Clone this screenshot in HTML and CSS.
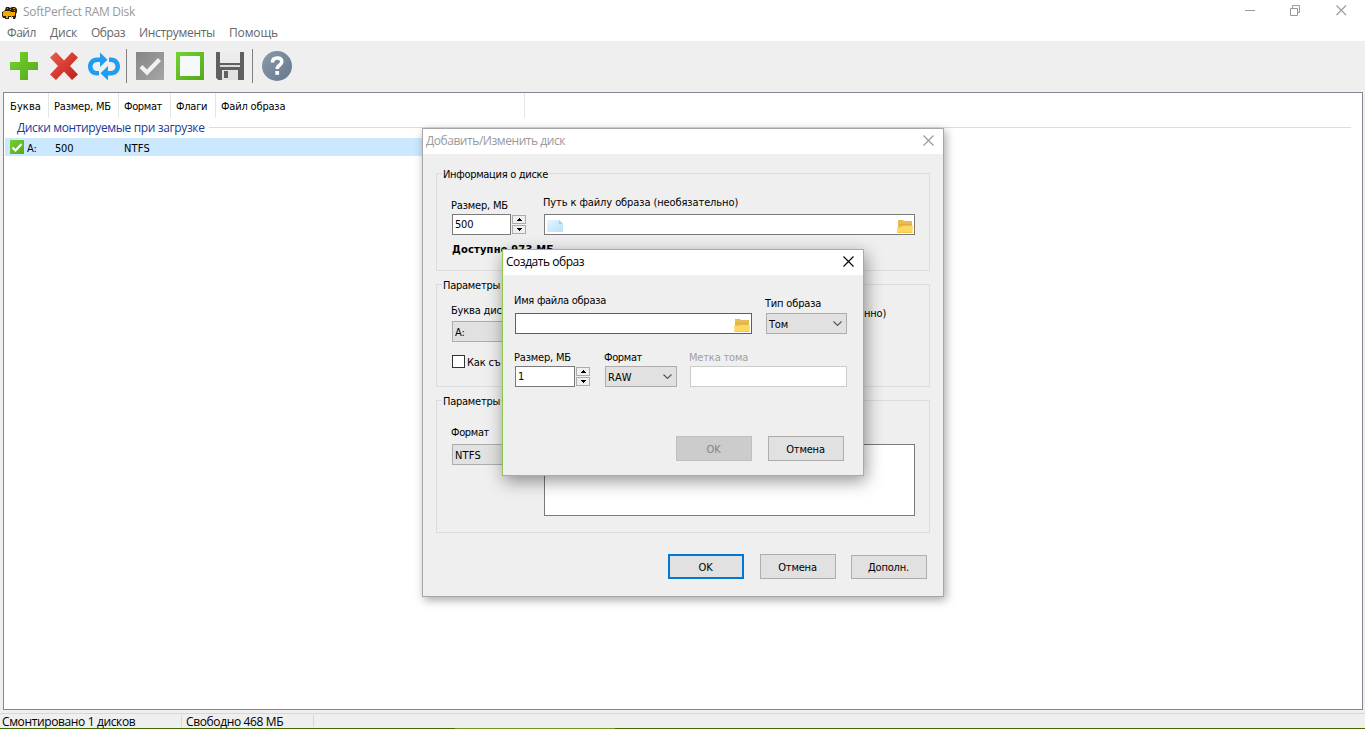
FILE: index.html
```html
<!DOCTYPE html>
<html lang="ru">
<head>
<meta charset="utf-8">
<title>SoftPerfect RAM Disk</title>
<link rel="stylesheet" href="styles.css">
</head>
<body>
<svg class="defs" width="0" height="0">
  <defs>
    <linearGradient id="gGreen" x1="0" y1="0" x2="1" y2="1"><stop offset="0" stop-color="#74d22f"/><stop offset="1" stop-color="#55a81c"/></linearGradient>
    <linearGradient id="gRed" x1="0" y1="0" x2="1" y2="1"><stop offset="0" stop-color="#ee5b4e"/><stop offset="1" stop-color="#bf1e16"/></linearGradient>
    <linearGradient id="gGray" x1="0" y1="0" x2="1" y2="1"><stop offset="0" stop-color="#858585"/><stop offset="1" stop-color="#a6a6a6"/></linearGradient>
    <linearGradient id="gSlate" x1="0" y1="0" x2="1" y2="1"><stop offset="0" stop-color="#8a9aac"/><stop offset="1" stop-color="#65788c"/></linearGradient>
    <linearGradient id="gDoc" x1="0" y1="0" x2="1" y2="1"><stop offset="0" stop-color="#e4f4ff"/><stop offset="1" stop-color="#b9e0fa"/></linearGradient>
    <symbol id="folder" viewBox="0 0 16 14"><path fill="#e8bc55" d="M1 0h5l1 1h8v8H1z"/><path fill="#dfad48" d="M1 4h14v1H1z"/><path fill="#ffd75e" d="M6 6h10l-.5 7H.5L0 7h5z"/><path fill="#f5c84c" d="M.5 12h15v1H.5z"/></symbol>
    <symbol id="close" viewBox="0 0 11 11"><path fill="none" stroke="currentColor" stroke-width="1.1" d="M.5.5l10 10M10.5.5l-10 10"/></symbol>
    <symbol id="chev" viewBox="0 0 9 5"><path fill="none" stroke="#555" stroke-width="1.1" d="M.5.5l4 4 4-4"/></symbol>
    <symbol id="up" viewBox="0 0 5 3"><path d="M2 0h1v1h1v1h1v1H0V2h1V1h1z"/></symbol>
    <symbol id="down" viewBox="0 0 5 3"><path d="M2 3h1V2h1V1h1V0H0v1h1v1h1z"/></symbol>
  </defs>
</svg>
<div class="app">
  <header class="titlebar">
    <svg class="logo" width="16" height="14" viewBox="0 0 16 14"><path fill="#2b2413" d="M4 1h3l1 1 2-1h3l2 2v3l-1 2v3l-1 2h-2v-2H7v2H3v-1H1L0 10V6l2-1 1-1z"/><path fill="#f7a900" d="M1 6l2-1h5l1 1h4v3l-1 1h-2v2H9v-2H6v2H4v-2H1z"/><path fill="#d98f00" d="M5 2h1v1H5zM11 2h2v1h-2zM8 3h1v1H8zM12 4h1v1h-1z"/></svg>
    <span class="apptitle ui ls-28">SoftPerfect RAM Disk</span>
    <svg class="winctl" width="102" height="11" viewBox="0 0 102 11"><g fill="none" stroke="#999"><path d="M0 5.500h10M45.500 3.500h7v7h-7zM47.500 3V.5h7v7H53"/><path stroke-width="1.100" d="M91.500.5l9.500 9.500M101 .5L91.500 10"/></g></svg>
  </header>
  <nav class="menu ui">
    <span class="m1">Файл</span><span class="m2">Диск</span><span class="m3">Образ</span><span class="m4">Инструменты</span><span class="m5">Помощь</span>
  </nav>
  <div class="toolbar">
    <svg width="28" height="28" viewBox="0 0 28 28"><path fill="url(#gGreen)" d="M10 0h8v10h10v8H18v10h-8V18H0v-8h10z"/></svg>
    <svg width="28" height="28" viewBox="0 0 28 28"><path fill="url(#gRed)" d="M6 0l8 8.500L22 0l6 5.500-8 8.500 8 8.500-6 5.500-8-8.500L6 28l-6-5.500L8 14 0 5.500z"/></svg>
    <svg class="refresh" width="32" height="28" viewBox="0 0 32 28"><g fill="#1f9df1"><path d="M12 .5L19.500 7.800 12 15v-5H9.500c-3 0-5 1.800-5 4.500s2 4.500 4.500 4.500h2v4.500H9C3.500 23.500 0 19.500 0 14.500S3.500 5.500 9 5.500h3z"/><path d="M20 28.500L12.500 21.200 20 14v5h2.500c3 0 5-1.800 5-4.500s-2-4.500-4.500-4.500h-2V5.500h2c5.500 0 9 4 9 9s-3.500 9-9 9h-3z"/></g></svg>
    <i class="tsep s1"></i>
    <svg width="28" height="28" viewBox="0 0 28 28"><path fill="url(#gGray)" d="M0 0h28v28H0z"/><path fill="none" stroke="#f2f2f2" stroke-width="4.200" d="M5 14.500l6 6L23.500 7.500"/></svg>
    <svg width="28" height="28" viewBox="0 0 28 28"><path fill="url(#gGreen)" d="M0 0h28v28H0z"/><path fill="#f4f9fb" d="M4 4h20v20H4z"/></svg>
    <svg width="28" height="28" viewBox="0 0 28 28"><path fill="#606060" d="M0 0h28v28H2l-2-2z"/><path fill="#ececec" d="M4 0h20v11H4z"/><path fill="#dcdcdc" d="M4 13h20v2H4z"/><path fill="#e2e2e2" d="M6 18h16v10H6z"/><path fill="#606060" d="M8 19h4v7H8z"/><path fill="#eee" d="M0 26v2h2z"/></svg>
    <i class="tsep s2"></i>
    <svg class="help" width="30" height="30" viewBox="0 0 30 30"><circle cx="15" cy="15" r="15" fill="url(#gSlate)"/><path fill="none" stroke="#fff" stroke-width="3.600" d="M10.500 11.500C10.500 8.500 12.500 7 15.200 7c2.800 0 4.600 1.500 4.600 3.800 0 3.400-4.600 3.400-4.600 6.700v.5"/><path fill="#fff" d="M13.300 20h3.800v3.800h-3.800z"/></svg>
  </div>
  <main class="list">
    <div class="cols">
      <span class="c1">Буква</span><span class="c2">Размер, МБ</span><span class="c3">Формат</span><span class="c4">Флаги</span><span class="c5">Файл образа</span>
    </div>
    <div class="group ui"><span class="gname">Диски монтируемые при загрузке</span><i></i></div>
    <div class="row">
      <svg width="14" height="14" viewBox="0 0 14 14"><path fill="url(#gGreen)" d="M0 0h14v14H0z"/><path fill="none" stroke="#fff" stroke-width="2.200" d="M2.500 7.500l3 3 6-6.500"/></svg>
      <span class="r1">A:</span><span class="r2">500</span><span class="r3">NTFS</span>
    </div>
  </main>
  <footer class="status ui"><span class="st1">Смонтировано 1 дисков</span><span class="st2">Свободно 468 МБ</span></footer>
  <div class="taskline"><i></i></div>
</div>

<section class="win edit">
  <header class="wtitle ui"><span class="et">Добавить/Изменить диск</span><svg width="11" height="11"><use href="#close"/></svg></header>
  <fieldset class="f1">
    <legend><span class="lg1">Информация о диске</span></legend>
    <div class="size">
      <label>Размер, МБ</label>
      <div class="spinrow"><div class="field w59">500</div><div class="spin"><i><svg width="5" height="3"><use href="#up"/></svg></i><i><svg width="5" height="3"><use href="#down"/></svg></i></div></div>
      <strong>Доступно 973 МБ</strong>
    </div>
    <div class="path">
      <label>Путь к файлу образа (необязательно)</label>
      <div class="field pathfield"><svg width="16" height="12" viewBox="0 0 16 12"><path fill="url(#gDoc)" d="M0 0h12l4 4v8H0z"/><path fill="#9fd0f2" d="M12 0v4h4z"/></svg><svg width="16" height="14"><use href="#folder"/></svg></div>
    </div>
  </fieldset>
  <fieldset class="f2">
    <legend><span>Параметры</span></legend>
    <div class="letter">
      <label>Буква дис</label>
      <div class="select"><span>A:</span></div>
      <div class="check"><i></i><span>Как съ</span></div>
    </div>
    <span class="tail">нно)</span>
  </fieldset>
  <fieldset class="f3">
    <legend><span>Параметры</span></legend>
    <div class="fmt"><label class="fl">Формат</label><div class="select wide"><span>NTFS</span></div></div>
    <div class="area"></div>
  </fieldset>
  <div class="buttons"><button class="primary" type="button">OK</button><button type="button">Отмена</button><button class="more" type="button">Дополн.</button></div>
</section>

<section class="win create">
  <header class="wtitle ui"><span class="ct">Создать образ</span><svg width="11" height="11"><use href="#close"/></svg></header>
  <div class="crow r-a">
    <div class="g-name"><label>Имя файла образа</label><div class="field focus"><svg width="16" height="14"><use href="#folder"/></svg></div></div>
    <div class="g-type"><label>Тип образа</label><div class="select"><span>Том</span><svg width="9" height="5"><use href="#chev"/></svg></div></div>
  </div>
  <div class="crow r-b">
    <div class="g-size"><label>Размер, МБ</label><div class="spinrow"><div class="field w60">1</div><div class="spin"><i><svg width="5" height="3"><use href="#up"/></svg></i><i><svg width="5" height="3"><use href="#down"/></svg></i></div></div></div>
    <div class="g-fmt"><label class="fl up">Формат</label><div class="select"><span class="raw">RAW</span><svg width="9" height="5"><use href="#chev"/></svg></div></div>
    <div class="g-vol"><label class="off">Метка тома</label><div class="field dis"></div></div>
  </div>
  <div class="cbuttons"><button class="disabled" type="button">OK</button><button type="button">Отмена</button></div>
</section>
</body>
</html>
```
FILE: styles.css
```css
* { box-sizing: border-box; }
body { margin: 0; width: 1365px; height: 729px; overflow: hidden; background: #fff; color: #000; font: 11px/14px "DejaVu Sans Condensed", "DejaVu Sans", sans-serif; font-stretch: condensed; letter-spacing: -0.18px; }
svg { display: block; flex: none; }
span, label, strong { white-space: nowrap; }
.defs { position: absolute; }
.ui { font-family: "Open Sans", "Noto Sans", sans-serif; font-size: 12px; font-stretch: normal; letter-spacing: -0.37px; }
.ls-28 { letter-spacing: -0.28px; }

.app { display: flex; flex-direction: column; height: 729px; background: #efefef; }
.titlebar { display: flex; height: 24px; background: #fff; color: #999; padding: 5px 18px 0 2px; }
.logo { margin-top: 1px; }
.apptitle { margin-left: 5px; flex: 1; line-height: 14px; }
.menu { display: flex; gap: 14px; height: 17px; background: #fff; color: #666; padding-left: 7px; line-height: 18px; }
.m1 { width: 29px; letter-spacing: -0.43px; }
.m2 { width: 27px; letter-spacing: -0.2px; }
.m3 { width: 34px; letter-spacing: -0.46px; }
.m4 { width: 76px; letter-spacing: -0.32px; }
.m5 { width: 49px; letter-spacing: -0.14px; }
.toolbar { display: flex; gap: 12px; height: 51px; padding: 11px 0 0 10px; }
.refresh { margin: 0 -6px 0 -2px; }
.tsep { width: 1px; height: 34px; margin: -3px -3px 0 0; background: #808080; }
.s2 { margin-left: -4px; }
.help { margin: -1px 0 0 0; }

.list { width: 1360px; height: 618px; margin-left: 3px; background: #fff; border: 1px solid #828790; }
.cols { display: flex; height: 25px; line-height: 28px; }
.cols span { border-right: 1px solid #e5e5e5; padding-left: 6px; }
.cols .c1 { width: 45px; letter-spacing: 0.09px; }
.cols .c2 { width: 70px; padding-left: 5px; }
.cols .c3 { width: 52px; padding-left: 5px; letter-spacing: -0.36px; }
.cols .c4 { width: 45px; padding-left: 5px; letter-spacing: -0.25px; }
.cols .c5 { width: 309px; padding-left: 5px; }
.group { display: flex; align-items: center; gap: 4px; height: 20px; padding: 0 11px 0 13px; color: #1b3c96; }
.gname { width: 188px; }
.group i { flex: 1; height: 1px; background: #d5dfec; margin-bottom: 2px; }
.row { display: flex; height: 18px; width: 520px; margin-left: 1px; padding: 2px 0 0 5px; background: #cce8ff; line-height: 17px; }
.r1 { width: 28px; margin-left: 3px; }
.r2 { width: 69px; }
.r3 { letter-spacing: 0.15px; }
.status { display: flex; height: 15px; margin-top: 3px; border-top: 1px solid #d7d7d7; line-height: 14px; }
.status span { border-right: 1px solid #d7d7d7; height: 12px; margin-top: 1px; }
.st1 { width: 182px; padding-left: 2px; }
.st2 { width: 132px; padding-left: 4px; }
.taskline { height: 1px; background: #3f6a00; padding-left: 455px; }
.taskline i { display: block; width: 160px; height: 1px; background: #6a9a1a; }

.win { position: absolute; background: #efefef; border: 1px solid #a6a6a6; display: flex; flex-direction: column; }
.edit { left: 422px; top: 128px; width: 522px; height: 469px; box-shadow: 2px 3px 9px rgba(0,0,0,.35); }
.create { left: 502px; top: 249px; width: 362px; height: 227px; border-color: #91c950; box-shadow: 2px 5px 16px rgba(0,0,0,.42); }
.wtitle { display: flex; justify-content: space-between; height: 25px; flex: none; background: #fff; padding: 7px 9px 0 3px; line-height: 10px; }
.wtitle svg { margin-top: -1px; }
.edit .wtitle { color: #999; }
.et { letter-spacing: -0.45px; }
.ct { letter-spacing: -0.47px; }

fieldset { display: flex; margin: 0 13px; padding: 0 0 0 14px; border: 1px solid #dcdcdc; min-width: 0; }
legend { padding: 0 1px; margin-left: -9px; height: 14px; line-height: 17px; letter-spacing: -0.25px; }
.lg1 { letter-spacing: -0.3px; }
label { display: block; height: 14px; line-height: 16px; }
.f1 { height: 105px; margin-top: 12px; }
.f2 { height: 110px; margin-top: 6px; }
.f3 { height: 140px; margin-top: 6px; }
.field { height: 21px; border: 1px solid #7a7a7a; background: #fff; padding-left: 2px; line-height: 20px; }
.select { display: flex; justify-content: space-between; align-items: center; height: 21px; border: 1px solid #adadad; background: #e1e1e1; padding: 0 4px 0 2px; }
.select span { line-height: 14px; padding-top: 2px; }
.spinrow { display: flex; gap: 1px; }
.w59 { width: 59px; }
.w60 { width: 60px; }
.spin { display: flex; flex-direction: column; gap: 1px; width: 14px; padding-top: 1px; }
.spin i { display: flex; align-items: center; justify-content: center; height: 9px; border: 1px solid #acacac; background: #efefef; }
.size { width: 92px; padding-top: 18px; }
.size .spinrow { margin: 2px 0 8px; padding-left: 1px; }
.size strong { padding-left: 1px; letter-spacing: 0.19px; }
.path { padding-top: 15px; width: 372px; }
.path label { margin-bottom: 5px; letter-spacing: -0.1px; }
.pathfield { display: flex; justify-content: space-between; padding: 5px 1px 0 2px; width: 371px; margin-left: 1px; }
.letter { width: 413px; padding-top: 12px; }
.letter .select { margin: 4px 0 13px 1px; width: 80px; }
.check { display: flex; gap: 2px; line-height: 16px; padding-left: 1px; }
.check i { width: 13px; height: 13px; border: 1px solid #333; background: #fff; }
.tail { padding-top: 16px; }
.fmt { width: 93px; padding-top: 18px; }
.fmt .select { margin: 5px 10px 0 1px; }
.fl { letter-spacing: -0.36px; }
.up { line-height: 15px; }
.wide { letter-spacing: 0.15px; }
.raw { letter-spacing: 0.54px; }
.area { width: 371px; height: 72px; margin-top: 37px; background: #fff; border: 1px solid #7a7a7a; }
button { width: 76px; height: 25px; padding: 2px 1px 0 0; border: 1px solid #adadad; background: #e1e1e1; color: #000; font: inherit; letter-spacing: inherit; }
.buttons { display: flex; margin: 21px 0 0 245px; gap: 16px; }
.primary { border: 2px solid #0078d7; }
.more { height: 24px; margin: 1px 0 0 -1px; padding-top: 1px; }

.crow { display: flex; padding-left: 12px; }
.crow label { margin-left: -1px; }
.r-a { margin-top: 18px; }
.g-name { width: 237px; margin-right: 14px; }
.g-name label { letter-spacing: -0.27px; }
.g-type { width: 81px; padding-top: 3px; }
.g-type .select { margin-top: 3px; }
.g-name .field { display: flex; justify-content: flex-end; padding: 5px 1px 0; margin-top: 6px; }
.focus { border-color: #0078d7; }
.r-b { margin-top: 16px; }
.g-size { width: 90px; }
.g-fmt { width: 72px; margin-right: 13px; }
.g-vol { width: 157px; }
.g-size .spinrow, .g-fmt .select, .g-vol .field { margin-top: 2px; }
.dis { border-color: #ccc; }
.off { color: #a0a0a0; }
.cbuttons { display: flex; gap: 16px; margin: 49px 0 0 173px; }
.disabled { background: #ccc; border-color: #bfbfbf; color: #838383; }
```
